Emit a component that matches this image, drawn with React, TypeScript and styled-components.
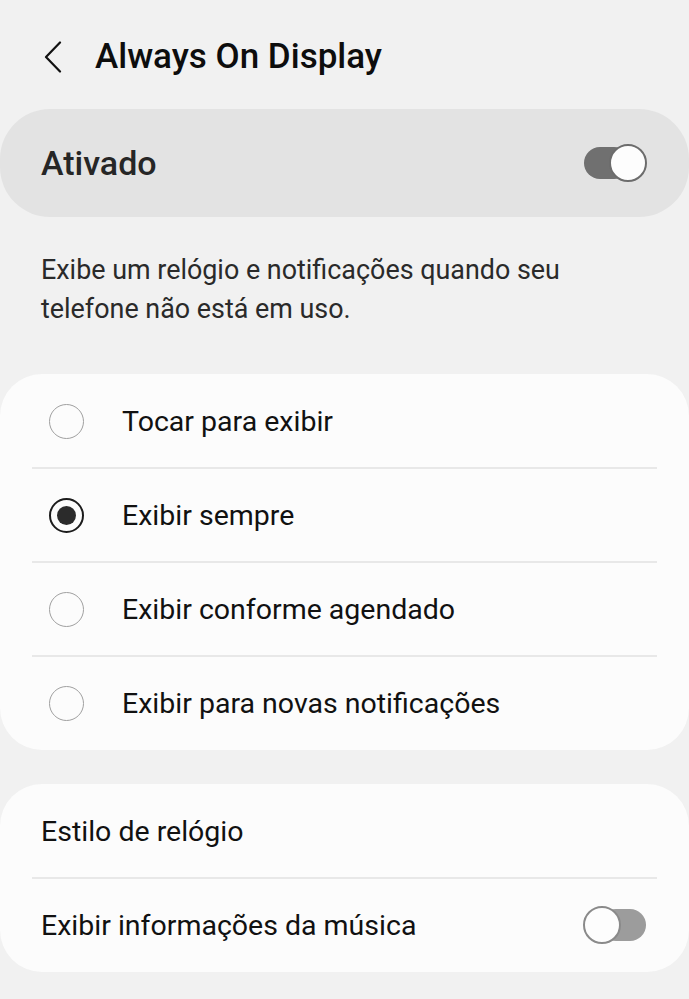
import React, { useState } from 'react';
import styled, { createGlobalStyle } from 'styled-components';

const GlobalStyle = createGlobalStyle`
  body {
    margin: 0;
    background: #f1f1f1;
    font-family: Roboto, 'Liberation Sans', sans-serif;
    color: #111;
  }
`;

const options = [
  'Tocar para exibir',
  'Exibir sempre',
  'Exibir conforme agendado',
  'Exibir para novas notificações',
];

const App = () => {
  const [enabled, setEnabled] = useState(true);
  const [mode, setMode] = useState(1);
  const [music, setMusic] = useState(false);

  return (
    <>
      <GlobalStyle />
      <Page>
        <Header>
          <BackButton type="button" aria-label="Voltar">
            <svg width="18" height="32" viewBox="0 0 18 32" fill="none">
              <path d="M16 1.5 L2 16 L16 30.5" stroke="#111" strokeWidth="2.2" strokeLinejoin="round" strokeLinecap="round" />
            </svg>
          </BackButton>
          <Title>Always On Display</Title>
        </Header>

        <MasterCard onClick={() => setEnabled(!enabled)}>
          <MasterLabel>Ativado</MasterLabel>
          <Switch $on={enabled} />
        </MasterCard>

        <Description>
          Exibe um relógio e notificações quando seu telefone não está em uso.
        </Description>

        <Card>
          {options.map((label, i) => (
            <React.Fragment key={label}>
              {i > 0 && <Divider />}
              <RadioRow onClick={() => setMode(i)}>
                <Radio $checked={mode === i} />
                <RowText>{label}</RowText>
              </RadioRow>
            </React.Fragment>
          ))}
        </Card>

        <Card>
          <Row>
            <RowText>Estilo de relógio</RowText>
          </Row>
          <Divider />
          <Row onClick={() => setMusic(!music)}>
            <RowText>Exibir informações da música</RowText>
            <Switch $on={music} />
          </Row>
        </Card>
      </Page>
    </>
  );
};

export default App;

const Page = styled.div`
  width: 689px;
  min-height: 999px;
  display: flex;
  flex-direction: column;
`;

const Header = styled.header`
  height: 109px;
  padding: 4px 0 0 44px;
  box-sizing: border-box;
  display: flex;
  align-items: center;
  gap: 33px;
`;

const BackButton = styled.button`
  border: 0;
  background: none;
  padding: 0;
  display: flex;
  align-items: center;
`;

const Title = styled.h1`
  margin: 0;
  font-size: 35px;
  font-weight: 500;
  color: #0d0d0d;
`;

const MasterCard = styled.div`
  height: 108px;
  background: #e3e3e3;
  border-radius: 50px;
  display: flex;
  align-items: center;
  justify-content: space-between;
  padding: 0 42px 0 41px;
`;

const MasterLabel = styled.span`
  font-size: 34px;
  font-weight: 500;
  color: #262626;
`;

const Switch = styled.span<{ $on: boolean }>`
  position: relative;
  width: 63px;
  height: 38px;
  flex: none;

  &::before {
    content: '';
    position: absolute;
    top: 3px;
    left: ${(p) => (p.$on ? '0' : '17px')};
    width: 46px;
    height: 32px;
    border-radius: 16px;
    background: ${(p) => (p.$on ? '#707070' : '#9c9c9c')};
  }

  &::after {
    content: '';
    position: absolute;
    top: 0;
    left: ${(p) => (p.$on ? '25px' : '0')};
    width: 34px;
    height: 34px;
    border-radius: 50%;
    background: #fdfdfd;
    border: 2px solid ${(p) => (p.$on ? '#6c6c6c' : '#8a8a8a')};
  }
`;

const Description = styled.p`
  margin: 0;
  padding: 34px 60px 45px 41px;
  font-size: 26.9px;
  line-height: 39px;
  color: #2a2a2a;
`;

const Card = styled.section`
  background: #fcfcfc;
  border-radius: 42px;
  display: flex;
  flex-direction: column;
  margin-bottom: 34px;
`;

const Divider = styled.div`
  height: 2px;
  margin: -1px 32px;
  background: #e8e8e8;
  position: relative;
`;

const Row = styled.div`
  height: 94px;
  display: flex;
  align-items: center;
  justify-content: space-between;
  padding: 0 43px 0 41px;
`;

const RadioRow = styled.div`
  height: 94px;
  display: flex;
  align-items: center;
  gap: 38px;
  padding-left: 49px;
`;

const Radio = styled.span<{ $checked: boolean }>`
  width: 35px;
  height: 35px;
  box-sizing: border-box;
  border-radius: 50%;
  flex: none;
  display: flex;
  align-items: center;
  justify-content: center;
  border: ${(p) => (p.$checked ? '2px solid #1c1c1c' : '1.5px solid #a0a0a0')};

  &::after {
    content: '';
    width: 19px;
    height: 19px;
    border-radius: 50%;
    background: #2b2b2b;
    display: ${(p) => (p.$checked ? 'block' : 'none')};
  }
`;

const RowText = styled.span`
  font-size: 28.5px;
  color: #111;
`;
